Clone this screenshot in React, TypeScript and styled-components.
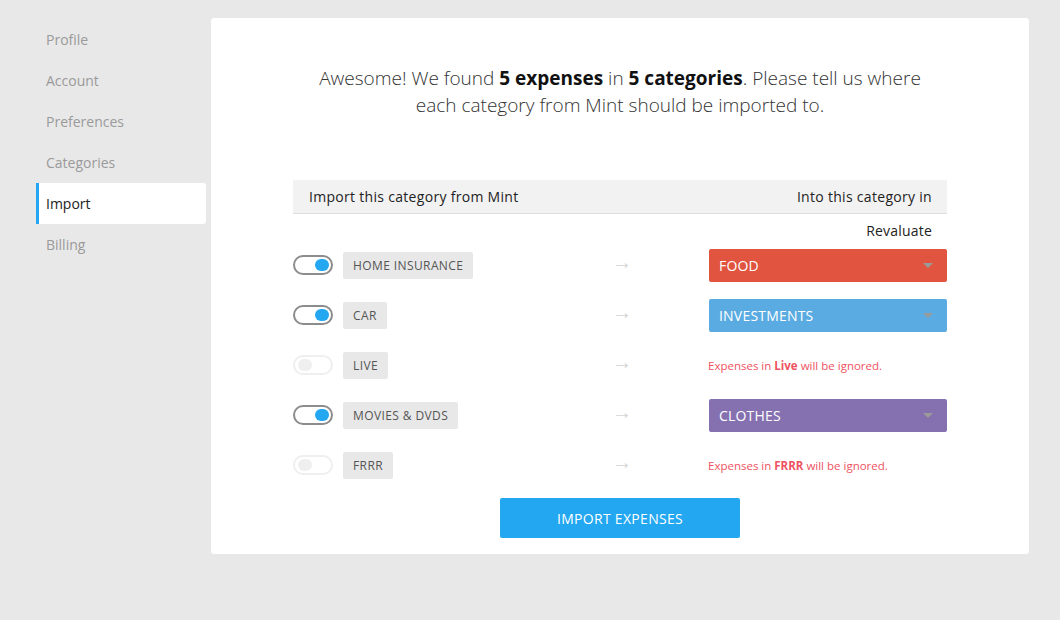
import React from 'react';
import styled, { createGlobalStyle, css } from 'styled-components';

const GlobalStyle = createGlobalStyle`
    html, body {
        margin: 0;
        padding: 0;
        background: #e8e8e8;
        font-family: 'Open Sans', 'Liberation Sans', sans-serif;
        color: #333;
    }
    * {
        box-sizing: border-box;
    }
`;

const Page = styled.div`
    display: flex;
    align-items: flex-start;
    width: 1060px;
    height: 620px;
    padding: 18px 31px 0 36px;
    gap: 5px;
`;

const SideNav = styled.nav`
    display: flex;
    flex-direction: column;
    width: 170px;
    padding-top: 1px;
`;

const NavItem = styled.div<{ active?: boolean }>`
    display: flex;
    align-items: center;
    height: 41px;
    padding-left: 10px;
    font-size: 14px;
    color: #9a9a9a;
    border-radius: 0 3px 3px 0;
    ${({ active }) =>
        active &&
        css`
            background: #fff;
            color: #222;
            border-left: 3px solid #22a7f0;
            padding-left: 7px;
        `}
`;

const Card = styled.main`
    flex: 1;
    display: flex;
    flex-direction: column;
    align-items: center;
    height: 536px;
    background: #fff;
    border-radius: 3px;
    padding: 47px 60px 0;
`;

const Intro = styled.p`
    margin: 0;
    font-size: 19px;
    font-weight: 300;
    line-height: 27px;
    text-align: center;
    color: #333;
    b {
        font-weight: 700;
        color: #111;
    }
`;

const Table = styled.section`
    width: 654px;
    margin-top: 61px;
`;

const HeaderRow = styled.div`
    display: flex;
    justify-content: space-between;
    align-items: center;
    height: 34px;
    padding: 0 15px 0 16px;
    background: #f2f2f2;
    border-bottom: 1px solid #dcdcdc;
    font-size: 14px;
    letter-spacing: 0.3px;
    color: #222;
`;

const SubHeader = styled.div`
    display: flex;
    justify-content: flex-end;
    height: 26px;
    padding: 7px 15px 0 0;
    font-size: 14px;
    line-height: 20px;
    letter-spacing: 0.2px;
    color: #222;
`;

const Row = styled.div`
    display: grid;
    grid-template-columns: 1fr 16px 1fr;
    align-items: center;
    height: 50px;
`;

const Source = styled.div`
    display: flex;
    align-items: center;
    gap: 10px;
`;

const Toggle = styled.span<{ on: boolean }>`
    position: relative;
    width: 40px;
    height: 20px;
    border-radius: 10px;
    border: 2px solid ${({ on }) => (on ? '#8c8c8c' : '#efefef')};
    background: #fff;
    &::after {
        content: '';
        position: absolute;
        top: 2px;
        left: ${({ on }) => (on ? '20px' : '3px')};
        width: 14px;
        height: 12px;
        border-radius: 6px;
        background: ${({ on }) => (on ? '#22a7f0' : '#efefef')};
    }
`;

const Tag = styled.span`
    display: flex;
    align-items: center;
    height: 27px;
    padding: 0 10px;
    border-radius: 2px;
    background: #e8e8e8;
    color: #555;
    font-size: 12px;
    font-weight: 500;
    letter-spacing: 0.4px;
    text-transform: uppercase;
`;

const Arrow = styled.span`
    color: #d4d4d4;
    font-size: 20px;
    font-weight: 300;
    line-height: 1;
    text-align: center;
    margin-top: -7px;
`;

const Target = styled.div`
    justify-self: end;
    width: 238px;
`;

const Select = styled.div<{ color: string }>`
    display: flex;
    align-items: center;
    justify-content: space-between;
    height: 33px;
    padding: 0 14px 0 10px;
    border-radius: 2px;
    background: ${({ color }) => color};
    color: #fff;
    font-size: 14px;
    letter-spacing: 0.2px;
    text-transform: uppercase;
    &::after {
        content: '';
        border-left: 5px solid transparent;
        border-right: 5px solid transparent;
        border-top: 5px solid #9a9a9a;
    }
`;

const Ignored = styled.div`
    margin-left: -1px;
    font-size: 11.5px;
    color: #ee5261;
    b {
        font-weight: 700;
    }
`;

const ImportButton = styled.button`
    display: block;
    width: 240px;
    height: 40px;
    margin: 8px auto 0;
    border: none;
    border-radius: 2px;
    background: #22a7f0;
    color: #fff;
    font-family: inherit;
    font-size: 14px;
    letter-spacing: 0.3px;
    text-transform: uppercase;
`;

type Mapping = {
    name: string;
    enabled: boolean;
    target?: string;
    color?: string;
};

const mappings: Mapping[] = [
    { name: 'Home Insurance', enabled: true, target: 'Food', color: '#e05440' },
    { name: 'Car', enabled: true, target: 'Investments', color: '#5aabe2' },
    { name: 'Live', enabled: false },
    { name: 'Movies & DVDs', enabled: true, target: 'Clothes', color: '#8671b0' },
    { name: 'FRRR', enabled: false },
];

const navItems = ['Profile', 'Account', 'Preferences', 'Categories', 'Import', 'Billing'];

const App = () => {
    return (
        <>
            <GlobalStyle />
            <Page>
                <SideNav>
                    {navItems.map((item) => (
                        <NavItem key={item} active={item === 'Import'}>
                            {item}
                        </NavItem>
                    ))}
                </SideNav>

                <Card>
                    <Intro>
                        Awesome! We found <b>5 expenses</b> in <b>5 categories</b>. Please tell us where
                        <br />
                        each category from Mint should be imported to.
                    </Intro>

                    <Table>
                        <HeaderRow>
                            <span>Import this category from Mint</span>
                            <span>Into this category in</span>
                        </HeaderRow>
                        <SubHeader>Revaluate</SubHeader>

                        {mappings.map((m) => (
                            <Row key={m.name}>
                                <Source>
                                    <Toggle on={m.enabled} />
                                    <Tag>{m.name}</Tag>
                                </Source>
                                <Arrow>→</Arrow>
                                <Target>
                                    {m.enabled && m.target ? (
                                        <Select color={m.color!}>{m.target}</Select>
                                    ) : (
                                        <Ignored>
                                            Expenses in <b>{m.name}</b> will be ignored.
                                        </Ignored>
                                    )}
                                </Target>
                            </Row>
                        ))}
                    </Table>

                    <ImportButton>Import Expenses</ImportButton>
                </Card>
            </Page>
        </>
    );
};

export default App;
